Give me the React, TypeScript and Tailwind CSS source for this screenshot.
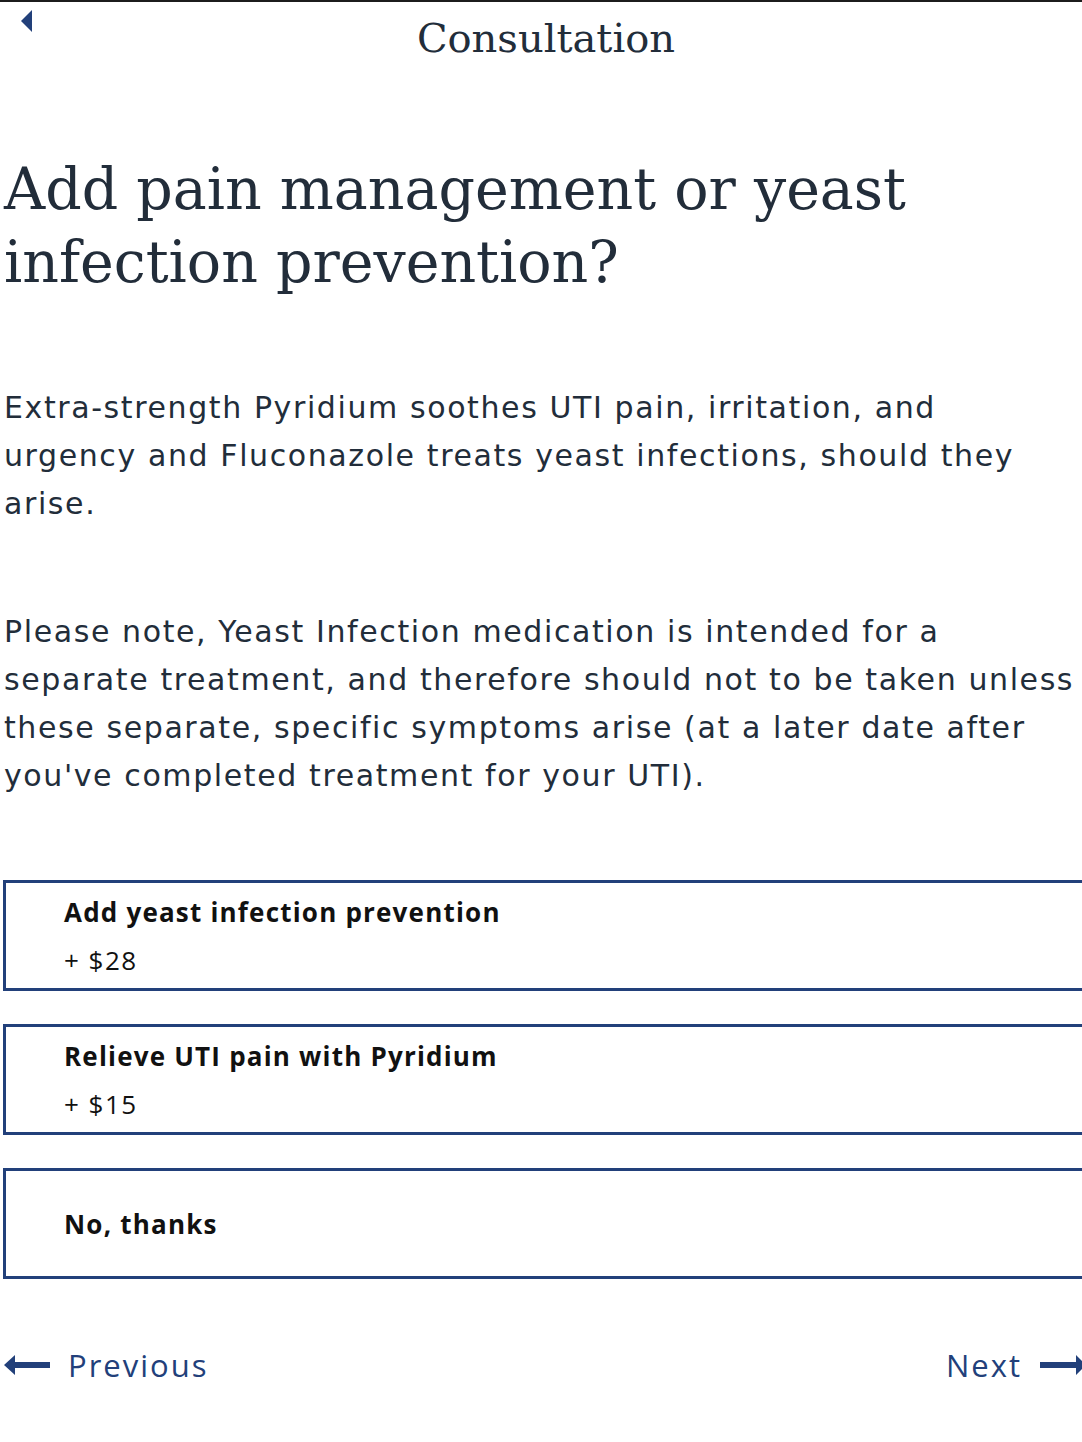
import React from "react"

const serif = { fontFamily: '"DejaVu Serif", "Liberation Serif", serif' }
const sans = { fontFamily: '"Open Sans", "Liberation Sans", sans-serif' }
const body = { fontFamily: '"DejaVu Sans", "Open Sans", sans-serif' }

function Option({ title, price }: { title: string; price?: string }) {
  return (
    <button className="w-[1100px] text-left border-[3px] border-[#22407a] bg-white pl-[58px] flex flex-col justify-center h-[111px]" style={sans}>
      <span className="text-[26px] font-bold tracking-[1.2px] text-[#111] leading-[36px]">{title}</span>
      {price && <span className="text-[26px] tracking-[1.5px] text-[#111] leading-[36px] mt-[12px]">{price}</span>}
    </button>
  )
}

export default function App() {
  return (
    <div className="w-[1082px] h-[1442px] overflow-hidden bg-white relative">
      <div className="h-[2px] bg-[#1c1c1c]" />
      <header className="relative h-[78px] flex justify-center pl-[10px]">
        <svg className="absolute left-[18px] top-[7px]" width="16" height="24" viewBox="0 0 16 24">
          <path d="M14 1 L3 12 L14 23 Z" fill="#22407a" />
        </svg>
        <h1 className="text-[40px] leading-[72px] text-[#222d3a]" style={serif}>Consultation</h1>
      </header>
      <main className="pl-[4px]">
        <h2 className="mt-[73px] text-[57px] leading-[73px] text-[#222d3a]" style={serif}>
          Add pain management or yeast<br />infection prevention?
        </h2>
        <p className="mt-[85px] text-[30px] leading-[48px] tracking-[1.6px] text-[#222d3a] w-[1050px]" style={body}>
          Extra-strength Pyridium soothes UTI pain, irritation, and urgency and Fluconazole treats yeast infections, should they arise.
        </p>
        <p className="mt-[80px] text-[30px] leading-[48px] tracking-[1.6px] text-[#222d3a] w-[1078px]" style={body}>
          Please note, Yeast Infection medication is intended for a separate treatment, and therefore should not to be taken unless these separate, specific symptoms arise (at a later date after you've completed treatment for your UTI).
        </p>
        <div className="mt-[80px] flex flex-col gap-[33px] -ml-[1px]">
          <Option title="Add yeast infection prevention" price="+ $28" />
          <Option title="Relieve UTI pain with Pyridium" price="+ $15" />
          <Option title="No, thanks" />
        </div>
        <nav className="mt-[63px] flex items-center justify-between text-[#22407a]" style={sans}>
          <a className="flex items-center gap-[18px] text-[31px] tracking-[2px]">
            <svg width="46" height="22" viewBox="0 0 46 22">
              <path d="M0 11 L11 1 L11 8 L46 8 L46 14 L11 14 L11 21 Z" fill="#22407a" />
            </svg>
            Previous
          </a>
          <a className="flex items-center gap-[18px] text-[31px] tracking-[2px]">
            Next
            <svg width="42" height="22" viewBox="0 0 42 22">
              <path d="M0 8 L36 8 L36 1 L46 11 L36 21 L36 14 L0 14 Z" fill="#22407a" />
            </svg>
          </a>
        </nav>
      </main>
    </div>
  )
}
